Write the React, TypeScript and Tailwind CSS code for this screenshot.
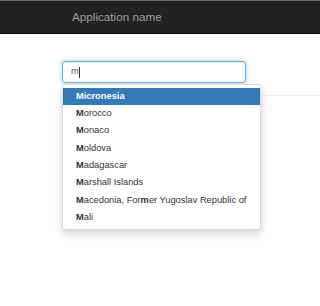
import React from "react";

const items = [
  ["M", "icronesia"],
  ["M", "orocco"],
  ["M", "onaco"],
  ["M", "oldova"],
  ["M", "adagascar"],
  ["M", "arshall Islands"],
  ["M", "acedonia, For", "m", "er Yugoslav Republic of"],
  ["M", "ali"],
];

export default function App() {
  return (
    <div className="w-[320px] h-[306px] bg-white overflow-hidden" style={{ fontFamily: '"Liberation Sans", Arial, sans-serif' }}>
      <div className="h-[34px] bg-[#222222] border-t border-t-[#6a6a6a] border-b border-b-[#080808] flex items-center pl-[72px]">
        <span className="text-[11.7px] text-[#9d9d9d] leading-none">Application name</span>
      </div>
      <div className="pl-[62px] pt-[27px]">
        <div className="relative w-[184px]">
          <div className="h-[22px] border border-[#66afe9] rounded-[3px] shadow-[inset_0_1px_1px_rgba(0,0,0,0.075),0_0_5px_rgba(102,175,233,0.6)] flex items-center pl-[8px] text-[9.3px] text-[#555555]">
            <span>m</span>
            <span className="w-px h-[11px] bg-[#333333]" />
          </div>
          <div className="absolute left-0 top-[23px] z-10 w-[199px] bg-white border border-[rgba(0,0,0,0.15)] rounded-[3px] shadow-[0_4px_8px_rgba(0,0,0,0.175)] pt-[3px] pb-[2px]">
            {items.map((it, i) => (
              <div
                key={i}
                className={`h-[17.33px] flex items-center pl-[13px] text-[9.3px] whitespace-nowrap ${i === 0 ? "bg-[#337ab7] text-white font-bold" : "text-[#333333]"}`}
              >
                {it.map((part, j) =>
                  j % 2 === 0 ? (
                    <strong key={j} className="font-bold">{part}</strong>
                  ) : (
                    <span key={j}>{part}</span>
                  )
                )}
              </div>
            ))}
          </div>
        </div>
        <div className="mt-[12px] h-px bg-[#eeeeee]" />
      </div>
    </div>
  );
}
